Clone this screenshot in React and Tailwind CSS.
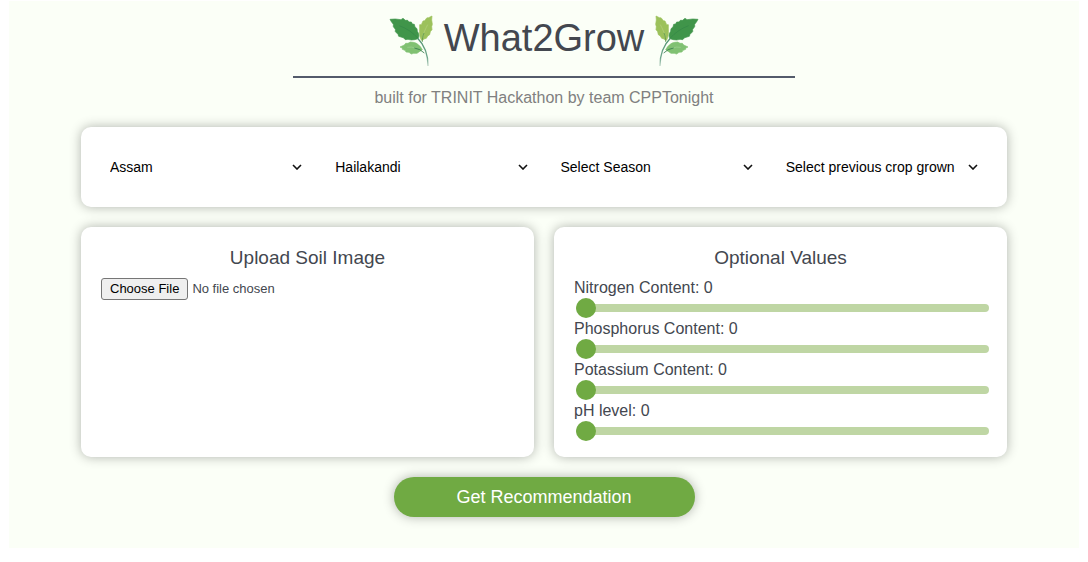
import { useState } from "react";
import clsx from "clsx";

function Leaves({ flipped }) {
  return (
    <svg
      viewBox="24 30 138 156"
      aria-hidden="true"
      className={clsx("h-[52px] w-[46px] shrink-0", flipped && "-scale-x-100")}
    >
      <defs>
        <linearGradient id={flipped ? "stemRight" : "stemLeft"} x1="0" y1="100" x2="0" y2="184" gradientUnits="userSpaceOnUse">
          <stop offset="0" stopColor="#4f9270" />
          <stop offset="0.7" stopColor="#6fa58c" />
          <stop offset="1" stopColor="#c9dccf" />
        </linearGradient>
      </defs>
      <g strokeLinejoin="round" strokeWidth="2">
        <path
          fill="#9cc15b"
          stroke="#9cc15b"
          d="M123 103 C119 94 118 82 119 72 L119 59 L124 59 L129 48 L134 47 L141 38 L144 39 L156 33 L155 45 L157 58 L155 65 L156 74 L151 80 L149 89 L143 93 L139 100 L132 102 L126 107 Z"
        />
        <path
          fill="#40954a"
          stroke="#40954a"
          d="M30 43 L46 42 L63 44 L69 40 L76 46 L83 46 L87 51 L94 51 L97 57 L103 58 L105 66 L111 71 L112 79 C118 87 118 96 114 101 L104 104 L94 105 L84 103 L76 104 L70 98 L56 94 L54 88 L46 80 L46 73 L40 65 L40 58 L34 50 Z"
        />
        <path
          fill="#80c172"
          stroke="#80c172"
          d="M60 126 L73 120 L77 115 L84 115 L91 111 L100 112 C112 114 120 122 127 134 L118 140 L111 145 L101 145 L94 147 L87 142 L78 141 L75 136 L67 133 L67 129 Z"
        />
      </g>
      <path fill="none" stroke="#2f8047" strokeWidth="1.5" d="M58 62 C80 70 99 83 114 100" />
      <path fill="none" stroke="#bdd58b" strokeWidth="1.5" d="M143 59 C137 71 130 84 126 101" />
      <path fill="none" stroke="#4c8b49" strokeWidth="2" d="M132 84 C128 92 127 101 127 111" />
      <path fill="none" stroke="#b3dba9" strokeWidth="1.2" d="M82 127 Q94 124 108 130" />
      <path fill="none" stroke="#347a4c" strokeWidth="2.5" d="M103 129 Q120 131 133 144" />
      <path
        fill="none"
        stroke={flipped ? "url(#stemRight)" : "url(#stemLeft)"}
        strokeWidth="4"
        d="M113 100 C132 119 144 146 144 183"
      />
    </svg>
  );
}

const SELECTS = [
  { label: "State", options: ["Assam", "Bihar", "Kerala"] },
  { label: "District", options: ["Hailakandi", "Cachar", "Kamrup"] },
  { label: "Season", options: ["Select Season", "Kharif", "Rabi"] },
  { label: "Previous crop", options: ["Select previous crop grown", "Rice", "Wheat"] },
];

function SelectField({ label, options }) {
  return (
    <div className="relative min-w-0">
      <select
        aria-label={label}
        className="h-10 w-full appearance-none border-0 bg-white pr-4 pl-1 text-sm text-black outline-none"
      >
        {options.map((option) => (
          <option key={option}>{option}</option>
        ))}
      </select>
      <svg
        viewBox="0 0 10 6"
        aria-hidden="true"
        className="pointer-events-none absolute top-[17px] right-1 h-1.5 w-2.5"
      >
        <path d="M1 1 L5 5 L9 1" fill="none" stroke="#111" strokeWidth="1.6" />
      </svg>
    </div>
  );
}

function SliderField({ id, label, max }) {
  const [value, setValue] = useState(0);
  return (
    <div>
      <label htmlFor={id} className="block text-base leading-5">
        {label}: {value}
      </label>
      <div className="flex h-5 items-center px-0.5">
        <input
          id={id}
          type="range"
          min="0"
          max={max}
          value={value}
          onChange={(event) => setValue(event.target.value)}
          className="-mr-1 h-2 flex-1 cursor-pointer appearance-none rounded-full bg-[#bfd6a4] outline-none [&::-webkit-slider-thumb]:size-5 [&::-webkit-slider-thumb]:appearance-none [&::-webkit-slider-thumb]:rounded-full [&::-webkit-slider-thumb]:bg-[#70aa43]"
        />
      </div>
    </div>
  );
}

function Card({ title, children }) {
  return (
    <section className="min-h-[230px] rounded-[10px] bg-white px-5 pt-[19px] pb-4 shadow-[0_0_12px_rgba(0,0,0,0.3)]">
      <h2 className="text-center text-[19px] leading-6">{title}</h2>
      {children}
    </section>
  );
}

export default function App() {
  return (
    <main className="mx-[9px] mt-px bg-[#fbfff7] px-[72px] pt-3.5 pb-[31px] font-['Liberation_Sans',Arial,sans-serif] text-[#43474f]">
      <header className="flex flex-col items-center">
        <div className="flex items-start gap-2.5">
          <Leaves />
          <h1 className="text-[38px] leading-[46px]">What2Grow</h1>
          <Leaves flipped />
        </div>
        <hr className="mt-[9px] w-[502px] max-w-full border-t-2 border-[#535b6b]" />
        <p className="mt-2 text-base leading-6 text-[#808080]">
          built for TRINIT Hackathon by team CPPTonight
        </p>
      </header>

      <form onSubmit={(event) => event.preventDefault()} className="mt-[17px] flex flex-col gap-5">
        <div className="grid grid-cols-4 gap-[25px] rounded-[10px] bg-white px-[25px] py-5 shadow-[0_0_12px_rgba(0,0,0,0.3)]">
          {SELECTS.map((field) => (
            <SelectField key={field.label} {...field} />
          ))}
        </div>

        <div className="grid grid-cols-2 gap-5">
          <Card title="Upload Soil Image">
            <input
              type="file"
              aria-label="Upload Soil Image"
              className="mt-2 block w-full text-[13px] leading-4 file:mr-1 file:rounded-[3px] file:border file:border-solid file:border-[#767676] file:bg-[#efefef] file:px-2 file:py-0.5 file:text-black"
            />
          </Card>
          <Card title="Optional Values">
            <div className="mt-2 flex flex-col gap-px">
              <SliderField id="nitrogen" label="Nitrogen Content" max="150" />
              <SliderField id="phosphorus" label="Phosphorus Content" max="150" />
              <SliderField id="potassium" label="Potassium Content" max="150" />
              <SliderField id="ph" label="pH level" max="14" />
            </div>
          </Card>
        </div>

        <button
          type="submit"
          className="h-10 w-[301px] cursor-pointer self-center rounded-full bg-[#70aa43] text-lg text-white shadow-[0_0_12px_rgba(0,0,0,0.3)]"
        >
          Get Recommendation
        </button>
      </form>
    </main>
  );
}
